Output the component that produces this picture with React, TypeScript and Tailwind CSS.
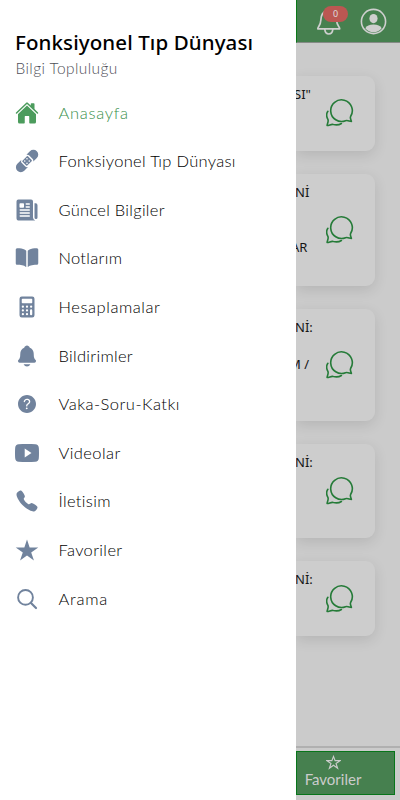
import React from "react";
import {
  IoHome, IoBandage, IoNewspaper, IoBook, IoCalculator, IoNotifications,
  IoHelpCircle, IoLogoYoutube, IoCall, IoStarSharp,
} from "react-icons/io5";

function SearchIcon({ className }: { className?: string }) {
  return (
    <svg className={className} viewBox="0 0 24 24" fill="none" stroke="currentColor" strokeWidth="1.9" strokeLinecap="round">
      <circle cx="10.5" cy="10.4" r="7.4" />
      <path d="M16 16L21 21" strokeWidth="2.2" />
    </svg>
  );
}

const menu = [
  { label: "Anasayfa", Icon: IoHome, track: "tracking-[0.7px]" },
  { label: "Fonksiyonel Tıp Dünyası", Icon: IoBandage, track: "tracking-[0.3px]" },
  { label: "Güncel Bilgiler", Icon: IoNewspaper, track: "tracking-[0.27px]" },
  { label: "Notlarım", Icon: IoBook, track: "tracking-[0.3px]" },
  { label: "Hesaplamalar", Icon: IoCalculator, track: "tracking-[0.56px]" },
  { label: "Bildirimler", Icon: IoNotifications, track: "tracking-[0.3px]" },
  { label: "Vaka-Soru-Katkı", Icon: IoHelpCircle, track: "tracking-[0.5px]" },
  { label: "Videolar", Icon: IoLogoYoutube, track: "tracking-[0.42px]" },
  { label: "İletisim", Icon: IoCall, track: "tracking-[0.32px]" },
  { label: "Favoriler", Icon: IoStarSharp, track: "tracking-[0.36px]" },
  { label: "Arama", Icon: SearchIcon, track: "tracking-[0.75px]" },
];

const cards = [
  { size: "h-[75px]", lines: ['SI"'] },
  { size: "h-[112px]", lines: ["Nİ", "", "", "AR"] },
  { size: "h-[112px]", lines: ["Nİ:", "", "M /"] },
  { size: "h-[94px]", lines: ["Nİ:"] },
  { size: "h-[75px]", lines: ["Nİ:"] },
];

function Chat() {
  return (
    <svg className="h-7 w-7 shrink-0" viewBox="0 0 28 28" fill="none" stroke="#257b38" strokeWidth="1.6" strokeLinecap="round" strokeLinejoin="round">
      <path d="M24.6 17.5A10.8 10.8 0 1 0 19.5 21.7C21.5 21 23.2 22.2 25.4 22.4C25 20.5 23.8 19.2 24.6 17.5Z" />
      <path d="M1.9 12.3C.1 14.7 .4 17.7 1.9 20.4C2.8 22.4 1.4 24.3 1.1 26.5C3.4 26.5 5.2 24.8 7.4 25.5C10.4 26.2 13.2 25.9 15.4 24.5" />
    </svg>
  );
}

export default function App() {
  return (
    <div className="flex h-[800px] w-[400px] overflow-hidden bg-[#cbcbcb] font-['Lato','Noto_Sans',sans-serif]">
      <aside className="z-10 flex w-[296px] shrink-0 flex-col bg-white pt-[29px]">
        <h1 className="h-[26px] whitespace-nowrap pl-[15px] font-['Noto_Sans',sans-serif] text-[20.5px] font-medium leading-[26px] tracking-[0.1px] text-black">Fonksiyonel Tıp Dünyası</h1>
        <p className="h-[24px] pl-[15.5px] text-[15.5px] font-light leading-[26px] tracking-[0.4px] text-[#4e4f58]">Bilgi Topluluğu</p>
        <nav className="mt-[9.3px]">
          {menu.map(({ label, Icon, track }, i) => (
            <a key={label} className={"flex h-[48.6px] items-center pl-[15px] " + (i === 0 ? "text-[#388f4b]" : "text-black")}>
              <Icon className={"mr-[19.5px] h-6 w-6 shrink-0 " + (i === 0 ? "text-[#4c9c5d]" : "text-[#71839d]")} />
              <span className={"whitespace-nowrap text-[16.5px] font-light leading-6 " + track}>{label}</span>
            </a>
          ))}
        </nav>
      </aside>
      <main className="flex w-[104px] shrink-0 flex-col">
        <header className="flex h-[42.5px] shrink-0 items-start border-b border-l border-b-[#858b86] border-l-[#0a7918] bg-[#46804f]">
          <div className="relative ml-[18px] mt-[7px] h-7 w-7">
            <svg className="h-7 w-7" viewBox="0 0 28 28" fill="none" stroke="#cfcfcf" strokeWidth="1.7" strokeLinecap="round" strokeLinejoin="round">
              <path d="M2.8 21.8C2.8 19.5 5.6 19 5.9 12.8C6.1 7.3 8 5 11 4.3L12.5 2.5H15L16.5 4.3C19.8 5 21.3 8 21.5 12.8C21.8 19 24.7 19.5 24.7 21.8Z" />
              <path d="M9.8 22.4Q10.3 27 13.8 27T17.8 22.4" />
            </svg>
            <span className="absolute left-[8px] top-[-1.5px] flex h-4 w-[25px] items-center justify-center rounded-full bg-[#bb5752] font-['Noto_Sans',sans-serif] text-[9px] text-[#dddddd]">0</span>
          </div>
          <svg className="ml-[17px] mt-[8px] h-[27px] w-[27px]" viewBox="0 0 27 27" fill="none">
            <circle cx="13.5" cy="13.5" r="12.1" stroke="#cfcfcf" strokeWidth="1.6" />
            <path d="M5.3 20.2Q7.3 16.5 13.5 16.5T21.7 20.2Q18.5 24.3 13.5 24.3T5.3 20.2Z" fill="#cfcfcf" />
            <ellipse cx="13.5" cy="10.6" rx="4.1" ry="4.6" fill="#cfcfcf" />
          </svg>
        </header>
        <section className="flex h-[703.5px] shrink-0 flex-col gap-[23.2px] pt-[33px]">
          {cards.map((card, i) => (
            <article key={i} className={"flex w-[79px] shrink-0 items-center justify-end rounded-r-[9px] bg-[#cdcdcd] pr-[21px] shadow-[0_4px_14px_rgba(0,0,0,0.11)] " + card.size}>
              <div className="flex h-full w-[30px] shrink-0 flex-col overflow-visible pt-[9px] font-['Noto_Sans',sans-serif] text-[13px] leading-[18.5px] text-[#151515]">
                {card.lines.map((line, j) => (
                  <span key={j} className={"h-[18.5px] whitespace-nowrap " + (line === "AR" ? "-ml-[5px]" : line === "M /" ? "-ml-[7px]" : line === 'SI"' ? "-ml-[2px]" : "-ml-px")}>{line}</span>
                ))}
              </div>
              <Chat />
            </article>
          ))}
        </section>
        <footer className="h-[54px] shrink-0 border-t-2 border-[#b0b0b0] pt-[3px]">
          <button className="flex h-[44px] w-[99px] flex-col items-center border border-[#08751a] bg-[#46804f] pr-[25px] pt-[3px] text-[#cccccc]">
            <svg className="h-[15px] w-[15px]" viewBox="0 0 16 16" fill="none" stroke="currentColor" strokeWidth="1.2"><path d="M8 1.5L9.7 6H15L10.7 9L12.4 14.2L8 11L3.6 14.2L5.3 9L1 6H6.3Z" /></svg>
            <span className="text-[15px] leading-[19px]">Favoriler</span>
          </button>
        </footer>
      </main>
    </div>
  );
}
